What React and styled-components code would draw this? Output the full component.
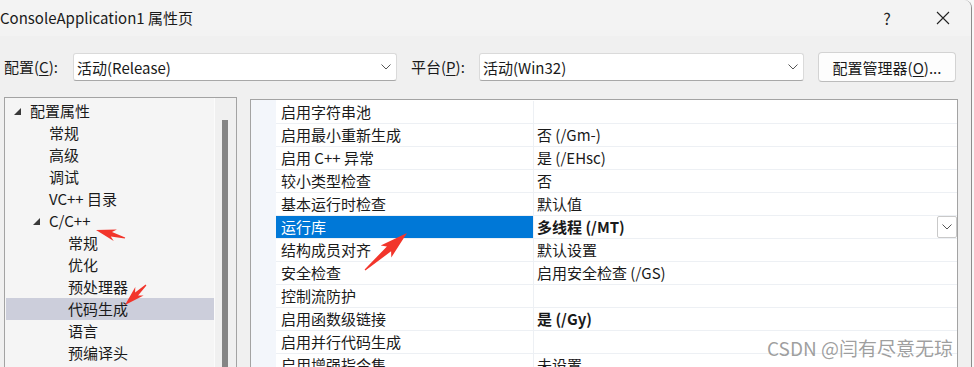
import styled, { createGlobalStyle } from "styled-components";

const treeItems = [
  { label: "配置属性", level: 0, open: true },
  { label: "常规", level: 1 },
  { label: "高级", level: 1 },
  { label: "调试", level: 1 },
  { label: "VC++ 目录", level: 1 },
  { label: "C/C++", level: 1, open: true },
  { label: "常规", level: 2 },
  { label: "优化", level: 2 },
  { label: "预处理器", level: 2 },
  { label: "代码生成", level: 2, selected: true },
  { label: "语言", level: 2 },
  { label: "预编译头", level: 2 },
];

const props = [
  { name: "启用字符串池", value: "" },
  { name: "启用最小重新生成", value: "否 (/Gm-)" },
  { name: "启用 C++ 异常", value: "是 (/EHsc)" },
  { name: "较小类型检查", value: "否" },
  { name: "基本运行时检查", value: "默认值" },
  { name: "运行库", value: "多线程 (/MT)", bold: true, selected: true },
  { name: "结构成员对齐", value: "默认设置" },
  { name: "安全检查", value: "启用安全检查 (/GS)" },
  { name: "控制流防护", value: "" },
  { name: "启用函数级链接", value: "是 (/Gy)", bold: true },
  { name: "启用并行代码生成", value: "" },
  { name: "启用增强指令集", value: "未设置" },
];

// red annotation arrows (tail -> tip)
const arrows = [
  { t: [125, 238], p: [96, 230], head: 16, wing: 6, shaft: 2.2 },
  { t: [146, 285], p: [125, 305], head: 16, wing: 6, shaft: 2.2 },
  { t: [365, 270], p: [407, 233], head: 24, wing: 8, shaft: 3.2 },
];

function arrowPoints({ t, p, head, wing, shaft }) {
  const dx = p[0] - t[0];
  const dy = p[1] - t[1];
  const len = Math.hypot(dx, dy);
  const ux = dx / len;
  const uy = dy / len;
  const nx = -uy;
  const ny = ux;
  const bx = p[0] - ux * head;
  const by = p[1] - uy * head;
  const wx = p[0] - ux * (head + 4);
  const wy = p[1] - uy * (head + 4);
  const pts = [
    [t[0] + nx * 0.6, t[1] + ny * 0.6],
    [bx + nx * shaft, by + ny * shaft],
    [wx + nx * wing, wy + ny * wing],
    p,
    [wx - nx * wing, wy - ny * wing],
    [bx - nx * shaft, by - ny * shaft],
    [t[0] - nx * 0.6, t[1] - ny * 0.6],
  ];
  return pts.map((q) => q[0].toFixed(1) + "," + q[1].toFixed(1)).join(" ");
}

const Chevron = () => (
  <svg width="10" height="6" viewBox="0 0 10 6">
    <polyline points="0.5,0.5 5,5 9.5,0.5" fill="none" stroke="#555" strokeWidth="1" />
  </svg>
);

export default function App() {
  return (
    <>
      <GlobalStyle />
      <Window>
        <TitleBar>
          <Title>ConsoleApplication1 属性页</Title>
          <CaptionButton>?</CaptionButton>
          <CaptionButton>
            <svg width="14" height="14" viewBox="0 0 14 14">
              <path d="M1 1 L13 13 M13 1 L1 13" stroke="#222" strokeWidth="1.1" />
            </svg>
          </CaptionButton>
        </TitleBar>

        <ConfigBar>
          <Label>
            配置(<u>C</u>):
          </Label>
          <Combo width={324}>
            <span>活动(Release)</span>
            <Chevron />
          </Combo>
          <Label gap={14} width={68}>
            平台(<u>P</u>):
          </Label>
          <Combo width={325}>
            <span>活动(Win32)</span>
            <Chevron />
          </Combo>
          <Button>
            配置管理器(<u>O</u>)...
          </Button>
        </ConfigBar>

        <Body>
          <TreePanel>
            <TreeList>
              {treeItems.map((item, index) => (
                <TreeRow key={index} level={item.level} selected={item.selected}>
                  <Toggle>
                    {item.open && (
                      <svg width="8" height="8" viewBox="0 0 8 8">
                        <polygon points="7,0 7,7 0,7" fill="#3a3a3a" />
                      </svg>
                    )}
                  </Toggle>
                  {item.label}
                </TreeRow>
              ))}
            </TreeList>
            <ScrollTrack>
              <Thumb />
            </ScrollTrack>
          </TreePanel>

          <GridPanel>
            <Margin />
            <Rows>
              {props.map((row, index) => (
                <Row key={index}>
                  <NameCell selected={row.selected}>{row.name}</NameCell>
                  <ValueCell bold={row.bold}>
                    <span>{row.value}</span>
                    {row.selected && (
                      <DropButton>
                        <Chevron />
                      </DropButton>
                    )}
                  </ValueCell>
                </Row>
              ))}
            </Rows>
          </GridPanel>
        </Body>

        <Watermark>CSDN @闫有尽意无琼</Watermark>

        <Annotations width="972" height="367" viewBox="0 0 972 367">
          {arrows.map((a, index) => (
            <polygon key={index} points={arrowPoints(a)} fill="#f2352b" />
          ))}
        </Annotations>
      </Window>
    </>
  );
}

const GlobalStyle = createGlobalStyle`
  html, body {
    margin: 0;
    padding: 0;
    background: #f7f7f7;
    overflow: hidden;
  }

  body {
    font-family: "Noto Sans CJK SC", "Noto Sans", sans-serif;
    font-size: 15px;
    color: #1a1a1a;
  }
`;

const Window = styled.div`
  position: relative;
  width: 972px;
  height: 367px;
  box-sizing: border-box;
  border-right: 1px solid #8c8c8c;
  border-top-right-radius: 8px;
  background: #f0f0f0;
  overflow: hidden;
  display: flex;
  flex-direction: column;
`;

const TitleBar = styled.div`
  height: 36px;
  flex: none;
  display: flex;
  align-items: center;
  background: #f3f3f3;
`;

const Title = styled.div`
  flex: 1;
  font-size: 15px;
  line-height: 36px;
  white-space: nowrap;
`;

const CaptionButton = styled.div`
  width: 56px;
  height: 36px;
  display: flex;
  align-items: center;
  justify-content: center;
  font-size: 16px;
  color: #222;
`;

const ConfigBar = styled.div`
  height: 61px;
  flex: none;
  display: flex;
  align-items: flex-start;
  box-sizing: border-box;
  padding: 17px 0 0 4px;

  u {
    text-underline-offset: 2px;
  }
`;

const Label = styled.div`
  width: ${(p) => p.width || 69}px;
  margin-left: ${(p) => p.gap || 0}px;
  height: 28px;
  line-height: 28px;
  white-space: nowrap;
`;

const Combo = styled.div`
  width: ${(p) => p.width}px;
  height: 28px;
  box-sizing: border-box;
  display: flex;
  align-items: center;
  justify-content: space-between;
  padding: 0 5px 0 3px;
  background: #fff;
  border: 1px solid #dadada;
  border-bottom-color: #a8a8a8;
  border-radius: 3px;
`;

const Button = styled.div`
  width: 138px;
  height: 30px;
  margin: -1px 0 0 14px;
  box-sizing: border-box;
  display: flex;
  align-items: center;
  justify-content: center;
  background: #fdfdfd;
  border: 1px solid #d3d3d3;
  border-bottom-color: #bcbcbc;
  border-radius: 4px;
  white-space: nowrap;
`;

const Body = styled.div`
  flex: 1;
  display: flex;
  align-items: flex-start;
  min-height: 0;
`;

const TreePanel = styled.div`
  width: 233px;
  height: 300px;
  margin-left: 4px;
  box-sizing: border-box;
  display: flex;
  border: 1px solid #a3a3a3;
  background: #f5f5f5;
`;

const TreeList = styled.div`
  flex: 1;
  padding: 2px 0 0 1px;
  border-right: 1px solid #fbfbfb;
`;

const TreeRow = styled.div`
  height: 22px;
  line-height: 22px;
  display: flex;
  align-items: center;
  padding-left: ${(p) => p.level * 19 + 8}px;
  background: ${(p) => (p.selected ? "#cccedb" : "transparent")};
  white-space: nowrap;
`;

const Toggle = styled.span`
  width: 16px;
  height: 22px;
  flex: none;
  display: flex;
  align-items: center;
  padding-top: 2px;
  box-sizing: border-box;
`;

const ScrollTrack = styled.div`
  width: 21px;
  flex: none;
  box-sizing: border-box;
  padding: 22px 0 0 7px;
  background: #f0f0f0;
`;

const Thumb = styled.div`
  width: 6px;
  height: 100%;
  background: #858585;
`;

const GridPanel = styled.div`
  width: 708px;
  height: 300px;
  margin: 2px 0 0 13px;
  box-sizing: border-box;
  display: flex;
  border: 1px solid #a3a3a3;
  background: #fff;
`;

const Margin = styled.div`
  width: 25px;
  flex: none;
  background: #f3f6fb;
`;

const Rows = styled.div`
  flex: 1;
  padding-top: 1px;
`;

const Row = styled.div`
  height: 23px;
  box-sizing: border-box;
  display: flex;
  border-bottom: 1px solid #edf0f4;
`;

const NameCell = styled.div`
  width: 258px;
  flex: none;
  box-sizing: border-box;
  padding-left: 5px;
  line-height: 22px;
  border-right: 1px solid #edf0f4;
  background: ${(p) => (p.selected ? "#0078d7" : "transparent")};
  color: ${(p) => (p.selected ? "#fff" : "inherit")};
  white-space: nowrap;
`;

const ValueCell = styled.div`
  flex: 1;
  display: flex;
  justify-content: space-between;
  padding-left: 3px;
  line-height: 22px;
  font-weight: ${(p) => (p.bold ? 700 : 400)};
  white-space: nowrap;
`;

const DropButton = styled.div`
  width: 20px;
  height: 22px;
  box-sizing: border-box;
  display: flex;
  align-items: center;
  justify-content: center;
  background: #fff;
  border: 1px solid #c9c9c9;
  border-radius: 2px;
`;

const Watermark = styled.div`
  position: absolute;
  left: 767px;
  top: 335px;
  font-size: 19px;
  line-height: 26px;
  color: rgba(128, 128, 128, 0.75);
  white-space: nowrap;
`;

const Annotations = styled.svg`
  position: absolute;
  left: 0;
  top: 0;
  pointer-events: none;
`;
